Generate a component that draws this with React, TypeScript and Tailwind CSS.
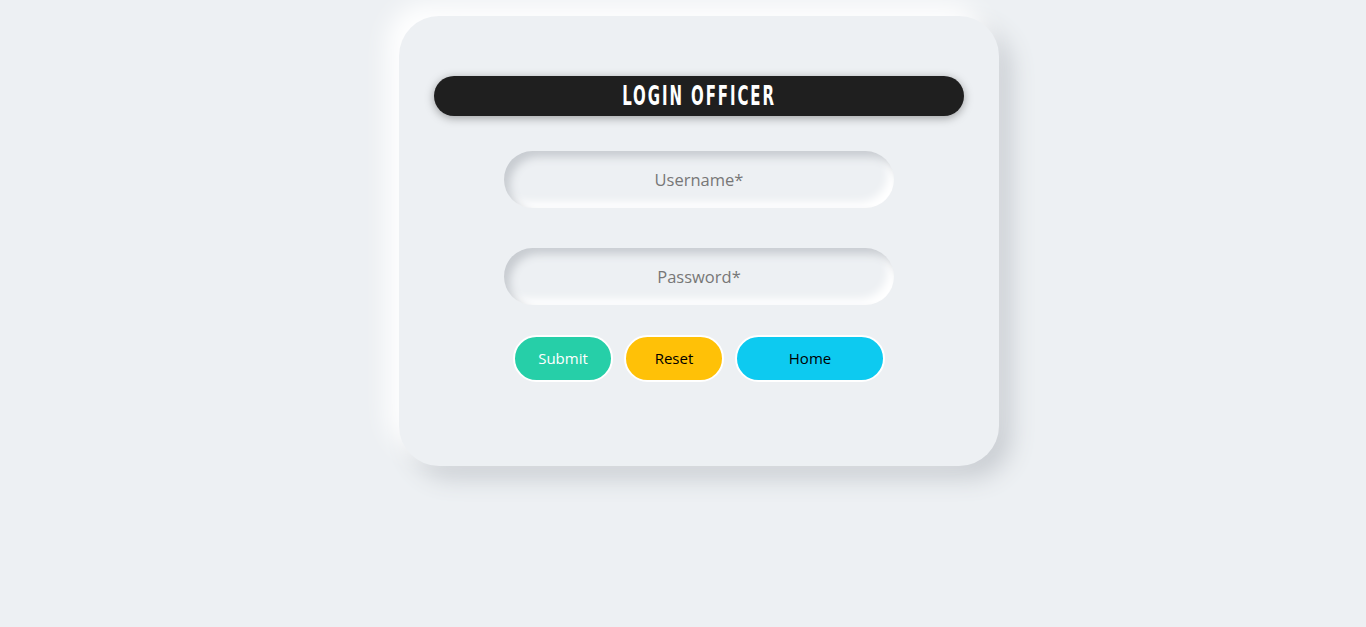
import React from 'react';

const App: React.FC = () => {
  return (
    <div className="min-h-screen w-full bg-[#edf0f3] pl-8 pt-4 font-['Open_Sans','Noto_Sans',sans-serif]">
      <div className="mx-auto flex h-[450px] w-[600px] flex-col items-center rounded-[40px] bg-[#edf0f3] px-[35px] pt-[60px] shadow-[-12px_-12px_24px_#ffffff,12px_12px_24px_#c9cdd2]">
        <div className="flex h-10 w-full items-center justify-center rounded-full bg-[#1f1f1f] shadow-[0_2px_10px_rgba(0,0,0,0.35)]">
          <h1 className="scale-x-[0.64] font-['DejaVu_Sans_Condensed','DejaVu_Sans',sans-serif] text-[26px] font-bold leading-none tracking-[3px] text-white">
            LOGIN OFFICER
          </h1>
        </div>

        <form className="mt-[35px] flex flex-col items-center">
          <input
            type="text"
            placeholder="Username*"
            className="h-[57px] w-[390px] rounded-full bg-[#edf0f3] text-center text-[16.5px] text-[#555] outline-none placeholder:text-[#777] shadow-[inset_6px_6px_8px_#c8ccd1,inset_-6px_-6px_8px_#ffffff]"
          />
          <input
            type="password"
            placeholder="Password*"
            className="mt-10 h-[57px] w-[390px] rounded-full bg-[#edf0f3] text-center text-[16.5px] text-[#555] outline-none placeholder:text-[#777] shadow-[inset_6px_6px_8px_#c8ccd1,inset_-6px_-6px_8px_#ffffff]"
          />

          <div className="mt-[30px] flex gap-[11px]">
            <button type="submit" className="h-[47px] w-[100px] rounded-full border-2 border-white bg-[#26cfa8] text-[15px] text-white">
              Submit
            </button>
            <button type="reset" className="h-[47px] w-[100px] rounded-full border-2 border-white bg-[#ffc107] text-[15px] text-black">
              Reset
            </button>
            <button type="button" className="h-[47px] w-[150px] rounded-full border-2 border-white bg-[#0dcaf0] text-[15px] text-black">
              Home
            </button>
          </div>
        </form>
      </div>
    </div>
  );
};

export default App;
